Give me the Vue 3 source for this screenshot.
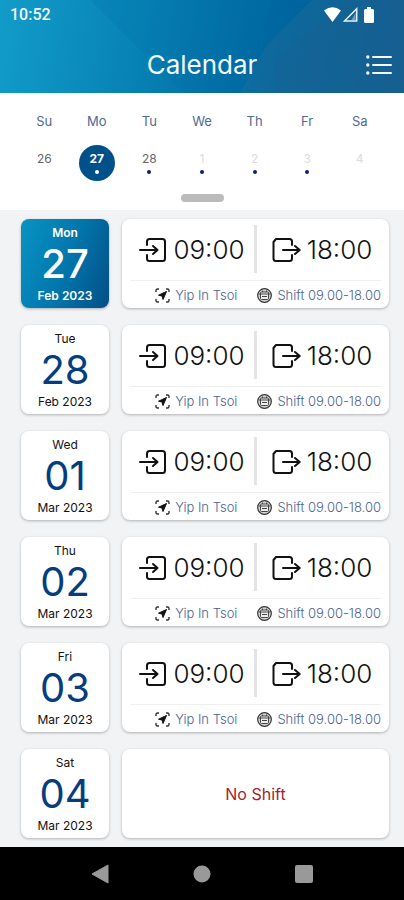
<script setup>
import { ref } from 'vue'

const week = [
  { name: 'Su', date: 26 },
  { name: 'Mo', date: 27, dot: true },
  { name: 'Tu', date: 28, dot: true },
  { name: 'We', date: 1, dot: true, faded: true },
  { name: 'Th', date: 2, dot: true, faded: true },
  { name: 'Fr', date: 3, dot: true, faded: true },
  { name: 'Sa', date: 4, faded: true }
]

const selected = ref(27)

const worked = { start: '09:00', end: '18:00', place: 'Yip In Tsoi', shift: 'Shift 09.00-18.00' }

const days = [
  { weekday: 'Mon', date: 27, month: 'Feb 2023', ...worked },
  { weekday: 'Tue', date: 28, month: 'Feb 2023', ...worked },
  { weekday: 'Wed', date: 1, month: 'Mar 2023', ...worked },
  { weekday: 'Thu', date: 2, month: 'Mar 2023', ...worked },
  { weekday: 'Fri', date: 3, month: 'Mar 2023', ...worked },
  { weekday: 'Sat', date: 4, month: 'Mar 2023' }
]

const pad = (n) => String(n).padStart(2, '0')
</script>

<template>
  <div class="screen">
    <header class="header">
      <svg class="facets" viewBox="0 0 404 93" preserveAspectRatio="none" aria-hidden="true">
        <path d="M90 0H312L266 46L240 93H183Z" fill="#006dab" opacity=".2" />
        <path d="M312 0H404V93H240L266 46Z" fill="#2f74a0" opacity=".3" />
        <path d="M345 0H404V93H275V60Z" fill="#1c5f91" opacity=".3" />
      </svg>
      <div class="status">
        <span class="clock">10:52</span>
        <span class="signals">
          <svg width="17" height="15" viewBox="0 0 17 15" aria-hidden="true">
            <path d="M0 3.5Q8.500-3 17 3.500L8.500 15Z" fill="#fff" />
          </svg>
          <svg width="15" height="15" viewBox="0 0 15 15" aria-hidden="true">
            <path d="M1.500 14H13.700V1.800Z" fill="none" stroke="#e6f1f7" stroke-width="1.500" />
            <path d="M8.500 13L12.500 6V13Z" fill="#e6f1f7" opacity=".45" />
          </svg>
          <svg class="battery" width="10" height="16" viewBox="0 0 10 16" aria-hidden="true">
            <path d="M3 0H7V2H8.500Q10 2 10 3.500V14.500Q10 16 8.500 16H1.500Q0 16 0 14.500V3.500Q0 2 1.500 2H3Z" fill="#fff" />
          </svg>
        </span>
      </div>
      <div class="bar">
        <h1 class="title">Calendar</h1>
        <button class="menu" type="button" aria-label="List view">
          <svg width="26" height="20" viewBox="0 0 26 20" aria-hidden="true">
            <g fill="#f4fafd">
              <circle cx="1.800" cy="2" r="1.700" />
              <circle cx="1.800" cy="10" r="1.700" />
              <circle cx="1.800" cy="18" r="1.700" />
            </g>
            <path d="M7 2H25M7 10H25M7 18H25" stroke="#f4fafd" stroke-width="2" stroke-linecap="round" />
          </svg>
        </button>
      </div>
    </header>

    <section class="week">
      <div class="days">
        <div v-for="d in week" :key="d.name" class="day">
          <span class="day-name">{{ d.name }}</span>
          <button
            type="button"
            class="day-date"
            :class="{ selected: d.date === selected, faded: d.faded }"
            @click="selected = d.date"
          >
            <span>{{ d.date }}</span>
            <span v-if="d.dot" class="dot"></span>
          </button>
        </div>
      </div>
      <button class="handle" type="button" aria-label="Expand calendar"></button>
    </section>

    <main class="list">
      <article v-for="d in days" :key="d.date" class="row">
        <div class="date-card" :class="{ active: d.date === selected }">
          <span class="small">{{ d.weekday }}</span>
          <span class="number">{{ pad(d.date) }}</span>
          <span class="small">{{ d.month }}</span>
        </div>
        <div v-if="d.start" class="shift-card">
          <div class="times">
            <div class="time">
              <svg width="28" height="26" viewBox="0 0 28 26" aria-hidden="true">
                <g fill="none" stroke="#111" stroke-width="2" stroke-linecap="round" stroke-linejoin="round">
                  <path d="M8 8V4.500Q8 2 10.500 2H23.500Q26 2 26 4.500V21.500Q26 24 23.500 24H10.500Q8 24 8 21.500V18" />
                  <path d="M1 13H18M14 9L18.500 13L14 17" />
                </g>
              </svg>
              <span>{{ d.start }}</span>
            </div>
            <span class="divider"></span>
            <div class="time end">
              <svg width="29" height="26" viewBox="0 0 29 26" aria-hidden="true">
                <g fill="none" stroke="#111" stroke-width="2" stroke-linecap="round" stroke-linejoin="round">
                  <path d="M20 8V4.500Q20 2 17.500 2H4L1.500 5V21.500Q1.500 24 4 24H17.500Q20 24 20 21.500V18" />
                  <path d="M11 13H27.500M23 9L27.700 13L23 17" />
                </g>
              </svg>
              <span>{{ d.end }}</span>
            </div>
          </div>
          <div class="details">
            <span class="detail">
              <svg width="15" height="15" viewBox="0 0 15 15" aria-hidden="true">
                <path d="M1 4V2.500Q1 1 2.500 1H4M11 1H12.500Q14 1 14 2.500V4M14 11V12.500Q14 14 12.500 14H11M4 14H2.500Q1 14 1 12.500V11" fill="none" stroke="#333" stroke-width="1.400" />
                <path d="M11.500 3.500L3.500 7.200L7 8L8 11.500Z" fill="#111" stroke="#111" stroke-linejoin="round" />
              </svg>
              {{ d.place }}
            </span>
            <span class="detail">
              <svg width="15" height="15" viewBox="0 0 15 15" aria-hidden="true">
                <circle cx="7.500" cy="7.500" r="6.800" fill="#d6d6d6" stroke="#333" stroke-width="1.200" />
                <rect x="3.500" y="4" width="8" height="7.500" rx="1" fill="#eee" stroke="#444" />
                <path d="M2 6H13M5 8.500H10M5.500 2.500V4M9.500 2.500V4" stroke="#444" />
              </svg>
              {{ d.shift }}
            </span>
          </div>
        </div>
        <div v-else class="shift-card empty">No Shift</div>
      </article>
    </main>

    <nav class="system" aria-label="System">
      <button type="button" aria-label="Back">
        <svg width="18" height="20" viewBox="0 0 18 20"><path d="M17 1V19L1 10Z" fill="#999" stroke="#999" stroke-linejoin="round" /></svg>
      </button>
      <button type="button" aria-label="Home">
        <svg width="18" height="18" viewBox="0 0 18 18"><circle cx="9" cy="9" r="8.500" fill="#999" /></svg>
      </button>
      <button type="button" aria-label="Recent apps">
        <svg width="18" height="18" viewBox="0 0 18 18"><rect width="18" height="18" rx="2" fill="#999" /></svg>
      </button>
    </nav>
  </div>
</template>

<style>
body {
  margin: 0;
  background: #f1f3f5;
}
</style>

<style scoped>
.screen {
  display: flex;
  flex-direction: column;
  min-height: 100vh;
  background: #f1f3f5;
  font-family: Inter, "Noto Sans", sans-serif;
  color: #111;
}

button {
  border: 0;
  padding: 0;
  background: none;
  font: inherit;
  color: inherit;
  cursor: pointer;
}

svg {
  display: block;
  flex: none;
}

.header {
  position: relative;
  background: linear-gradient(100deg, #129cc9 0%, #0782b4 35%, #00649c 68%, #0b5589 100%);
  color: #f4fafd;
}

.facets {
  position: absolute;
  inset: 0;
  width: 100%;
  height: 100%;
}

.status,
.bar {
  position: relative;
  display: flex;
  align-items: center;
}

.status {
  justify-content: space-between;
  height: 29px;
  padding: 0 30px 0 10px;
}

.clock {
  font-family: Roboto, sans-serif;
  font-size: 16px;
  font-weight: 500;
}

.signals {
  display: flex;
  align-items: center;
  gap: 2px;
}

.battery {
  margin-left: 4px;
}

.bar {
  justify-content: center;
  height: 64px;
}

.title {
  margin: 0;
  padding: 16px 0 8px;
  font-size: 26px;
  line-height: 32px;
  font-weight: 400;
}

.menu {
  position: absolute;
  right: 12px;
  top: 26px;
}

.week {
  display: flex;
  flex-direction: column;
  align-items: center;
  padding: 18px 18px 8px;
  background: #fff;
}

.days {
  display: grid;
  grid-template-columns: repeat(7, 1fr);
  width: 100%;
}

.day {
  display: flex;
  flex-direction: column;
  align-items: center;
  gap: 14px;
}

.day-name {
  font-size: 13px;
  line-height: 20px;
  color: #506a93;
}

.day-date {
  display: flex;
  flex-direction: column;
  align-items: center;
  gap: 2px;
  box-sizing: border-box;
  width: 36px;
  height: 36px;
  padding-top: 5px;
  border-radius: 50%;
  font-size: 12px;
  line-height: 18px;
  color: #666;
}

.day-date.faded {
  color: #dcdcdc;
}

.day-date.selected {
  background: #00508a;
  color: #fff;
  font-weight: 700;
}

.dot {
  width: 4px;
  height: 4px;
  border-radius: 50%;
  background: #0c1c80;
}

.selected .dot {
  background: #fff;
}

.handle {
  width: 43px;
  height: 8px;
  margin-top: 13px;
  border-radius: 4px;
  background: #bbb;
}

.list {
  flex: 1;
  display: flex;
  flex-direction: column;
  gap: 17px;
  padding: 9px 15px 9px 21px;
}

.row {
  display: flex;
  gap: 13px;
}

.date-card,
.shift-card {
  box-sizing: border-box;
  min-height: 89px;
  border-radius: 8px;
  background: #fff;
  box-shadow: 0 1px 3px rgba(0, 0, 0, 0.28);
}

.date-card {
  flex: none;
  display: flex;
  flex-direction: column;
  align-items: center;
  width: 88px;
  padding-top: 6px;
}

.small {
  font-size: 12px;
  line-height: 15px;
}

.number {
  font-size: 40px;
  line-height: 48px;
  color: #063d7d;
}

.active {
  background: linear-gradient(110deg, #0894c2, #0277ad 50%, #034f86);
  color: #fff;
  font-weight: 600;
}

.active .number {
  color: #fff;
  font-weight: 500;
}

.shift-card {
  flex: 1;
  padding: 0 8px;
}

.times {
  display: grid;
  grid-template-columns: 1fr 3px 1fr;
  padding: 6px 0 7px;
  border-bottom: 1px solid #eee;
}

.time {
  display: flex;
  align-items: center;
  justify-content: center;
  gap: 6px;
  height: 48px;
  padding-top: 1px;
  box-sizing: border-box;
  font-size: 26px;
  font-weight: 300;
}

.divider {
  background: #e4e4e4;
}

.end {
  padding-left: 6px;
}

.details {
  display: flex;
  justify-content: flex-end;
  gap: 20px;
  padding-top: 6px;
}

.detail {
  display: flex;
  align-items: center;
  gap: 5px;
  font-size: 13px;
  line-height: 16px;
  font-weight: 300;
  color: #4a6291;
  white-space: nowrap;
}

.empty {
  display: flex;
  align-items: center;
  justify-content: center;
  font-size: 16px;
  color: #a5222c;
}

.system {
  display: flex;
  align-items: center;
  justify-content: center;
  gap: 84px;
  height: 53px;
  background: #000;
}
</style>
